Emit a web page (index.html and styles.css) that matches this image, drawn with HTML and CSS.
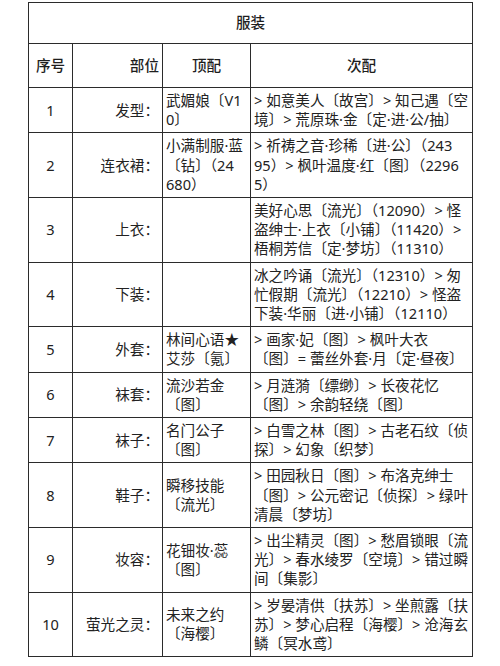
FILE: index.html
```html
<!DOCTYPE html>
<html lang="zh">
<head>
<meta charset="utf-8">
<title>服装</title>
<link rel="stylesheet" href="styles.css">
</head>
<body>
<div class="page">
<table class="outfit">
<colgroup>
<col class="c-no"><col class="c-part"><col class="c-top"><col class="c-alt">
</colgroup>
<thead>
<tr class="title-row"><th colspan="4" class="title">服装</th></tr>
<tr class="head-row">
<th class="no">序号</th>
<th class="part">部位</th>
<th class="top">顶配</th>
<th class="alt">次配</th>
</tr>
</thead>
<tbody>
<tr>
<td class="no">1</td><td class="part">发型：</td>
<td class="top">武媚娘〔V1<br>0〕</td>
<td class="alt">&gt; 如意美人〔故宫〕&gt; 知己遇〔空<br>境〕&gt; 荒原珠·金〔定·进·公/抽〕</td>
</tr>
<tr>
<td class="no">2</td><td class="part">连衣裙：</td>
<td class="top">小满制服·蓝<br>〔钻〕（24<br>680）</td>
<td class="alt">&gt; 祈祷之音·珍稀〔进·公〕（243<br>95）&gt; 枫叶温度·红〔图〕（2296<br>5）</td>
</tr>
<tr>
<td class="no">3</td><td class="part">上衣：</td>
<td class="top"></td>
<td class="alt">美好心思〔流光〕（12090）&gt; 怪<br>盗绅士·上衣〔小铺〕（11420）&gt;<br>梧桐芳信〔定·梦坊〕（11310）</td>
</tr>
<tr>
<td class="no">4</td><td class="part">下装：</td>
<td class="top"></td>
<td class="alt">冰之吟诵〔流光〕（12310）&gt; 匆<br>忙假期〔流光〕（12210）&gt; 怪盗<br>下装·华丽〔进·小铺〕（12110）</td>
</tr>
<tr>
<td class="no">5</td><td class="part">外套：</td>
<td class="top">林间心语★<br>艾莎〔氪〕</td>
<td class="alt">&gt; 画家·妃〔图〕&gt; 枫叶大衣<br>〔图〕= 蕾丝外套·月〔定·昼夜〕</td>
</tr>
<tr>
<td class="no">6</td><td class="part">袜套：</td>
<td class="top">流沙若金<br>〔图〕</td>
<td class="alt">&gt; 月涟漪〔缥缈〕&gt; 长夜花忆<br>〔图〕&gt; 余韵轻绕〔图〕</td>
</tr>
<tr>
<td class="no">7</td><td class="part">袜子：</td>
<td class="top">名门公子<br>〔图〕</td>
<td class="alt">&gt; 白雪之林〔图〕&gt; 古老石纹〔侦<br>探〕&gt; 幻象〔织梦〕</td>
</tr>
<tr>
<td class="no">8</td><td class="part">鞋子：</td>
<td class="top">瞬移技能<br>〔流光〕</td>
<td class="alt">&gt; 田园秋日〔图〕&gt; 布洛克绅士<br>〔图〕&gt; 公元密记〔侦探〕&gt; 绿叶<br>清晨〔梦坊〕</td>
</tr>
<tr>
<td class="no">9</td><td class="part">妆容：</td>
<td class="top">花钿妆·蕊<br>〔图〕</td>
<td class="alt">&gt; 出尘精灵〔图〕&gt; 愁眉锁眼〔流<br>光〕&gt; 春水绫罗〔空境〕&gt; 错过瞬<br>间〔集影〕</td>
</tr>
<tr>
<td class="no">10</td><td class="part">萤光之灵：</td>
<td class="top">未来之约<br>〔海樱〕</td>
<td class="alt">&gt; 岁晏清供〔扶苏〕&gt; 坐煎露〔扶<br>苏〕&gt; 梦心启程〔海樱〕&gt; 沧海玄<br>鳞〔冥水鸢〕</td>
</tr>
</tbody>
</table>
</div>
</body>
</html>
```
FILE: styles.css
```css
html, body {
  margin: 0;
  padding: 0;
  background: #ffffff;
}
body {
  font-family: "Noto Sans", "Noto Sans CJK SC", sans-serif;
  font-size: 14.6px;
  color: #222222;
}
.page {
  padding: 2px 0 0 28px;
}
.outfit {
  border-collapse: collapse;
  table-layout: fixed;
  width: 444px;
}
.c-no { width: 44px; }
.c-part { width: 90px; }
.c-top { width: 88px; }
.c-alt { width: 222px; }
.outfit th,
.outfit td {
  border: 1.5px solid #2b2b2b;
  padding: 3px 3px;
  line-height: 19.2px;
  vertical-align: middle;
  white-space: nowrap;
  overflow: hidden;
}
.outfit th {
  font-weight: 500;
  color: #1e1e1e;
}
.title-row { height: 41px; }
.head-row { height: 44px; }
.title { text-align: center; }
.no { text-align: center; }
.part { text-align: right; }
th.top, th.alt { text-align: center; }
td.top, td.alt { text-align: left; }
```
